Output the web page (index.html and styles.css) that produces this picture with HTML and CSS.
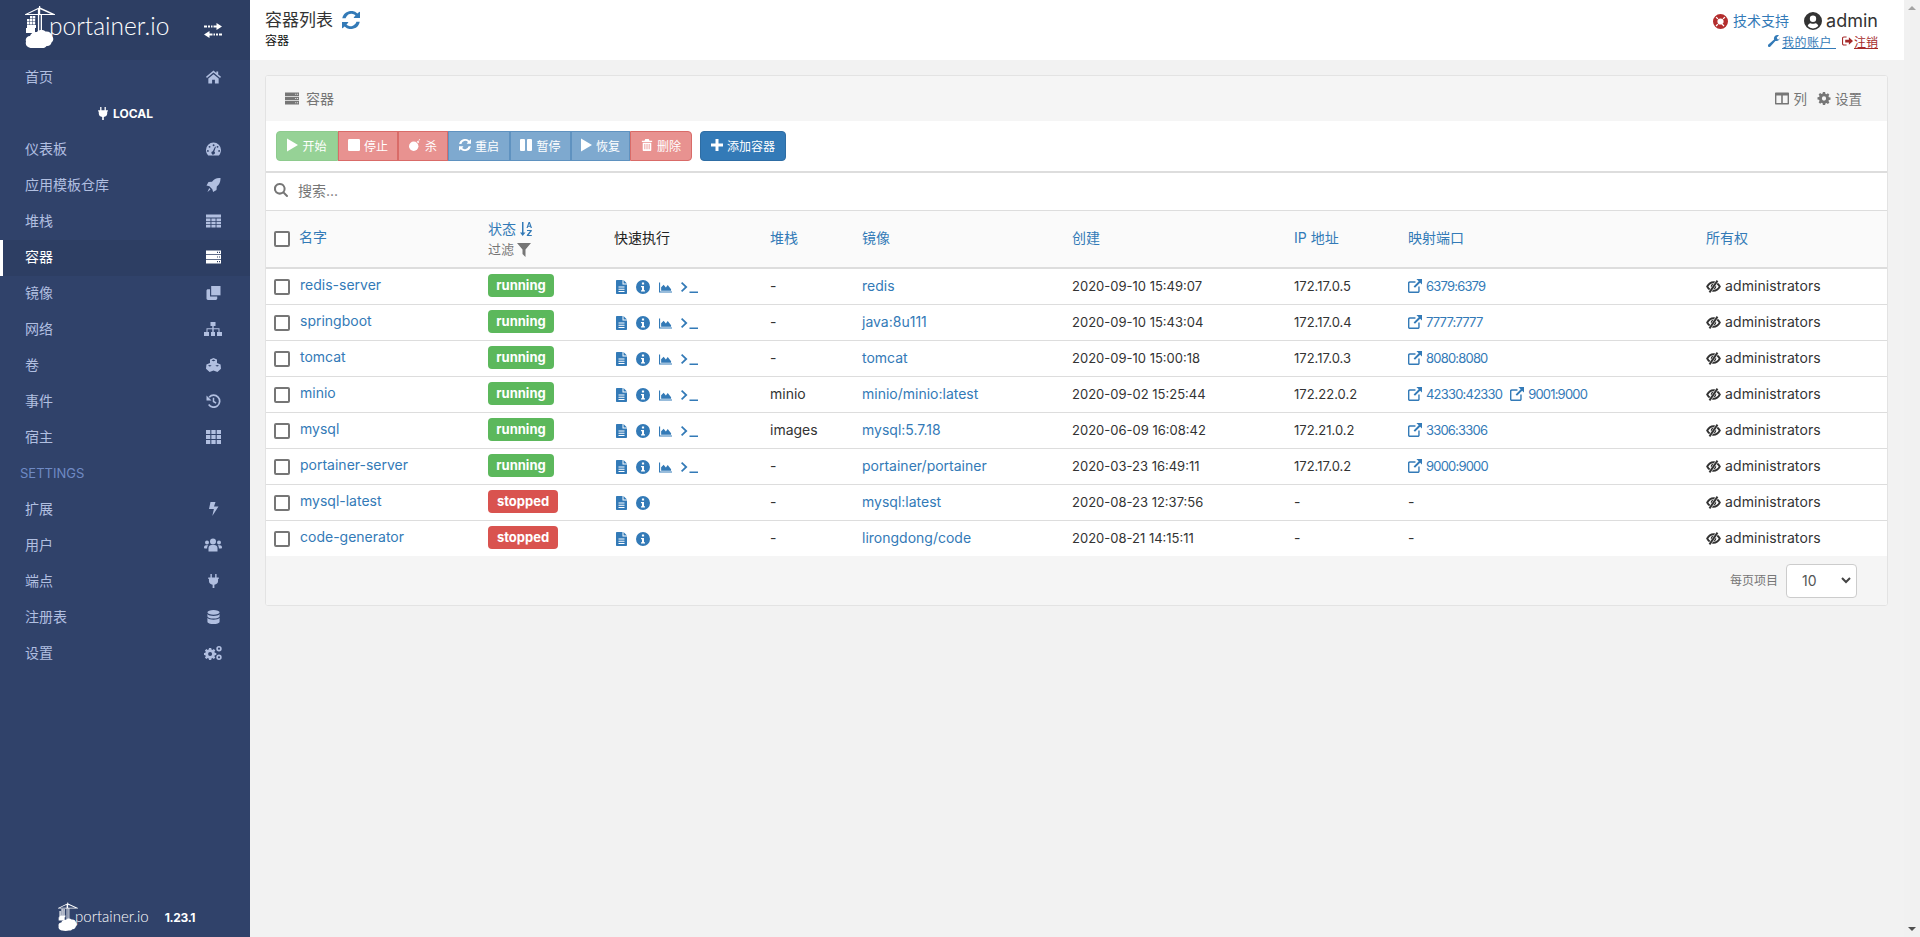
FILE: index.html
```html
<!DOCTYPE html>
<html lang="zh">
<head>
<meta charset="utf-8">
<title>Portainer</title>
<link rel="stylesheet" href="styles.css">
</head>
<body>
<svg class="defs" width="0" height="0" aria-hidden="true">
  <symbol id="i-home" viewBox="0 0 16 14"><path d="M8 0 0 6.800l1 1.200L8 2.200 15 8l1-1.200-3-2.500V1h-2v1.600zM2.500 8.600V14h4v-4h3v4h4V8.600L8 4z"/></symbol>
  <symbol id="i-plug" viewBox="0 0 12 16"><path d="M2.500 0h1.600v4h3.800V0h1.600v4H12v1.600h-.8V8c0 2.400-1.800 4-4.200 4.300V16H5v-3.700C2.600 12 .8 10.400.8 8V5.600H0V4h2.500z"/></symbol>
  <symbol id="i-gauge" viewBox="0 0 16 14"><path fill-rule="evenodd" d="M8 0a8 8 0 0 1 8 8c0 2.300-.9 4.400-2.300 6H2.300A8.100 8.100 0 0 1 0 8a8 8 0 0 1 8-8zM8.100 2a1 1 0 1 0 0 2 1 1 0 0 0 0-2zM3.800 3.700a1 1 0 1 0 0 2 1 1 0 0 0 0-2zm8.500 0a1 1 0 1 0 0 2 1 1 0 0 0 0-2zM2 8a1 1 0 1 0 0 2 1 1 0 0 0 0-2zm12 0a1 1 0 1 0 0 2 1 1 0 0 0 0-2zM9.600 4.500 7.300 9.300a1.800 1.800 0 1 0 1.500.4l1.800-5z"/></symbol>
  <symbol id="i-rocket" viewBox="0 0 14 14"><path d="M14 0c.2 3.600-1.200 6.600-3.700 8.500l-.3 3.400L6.600 14l-.8-2.800L2.900 8.300 0 7.500l2-3.400 3.500-.4C7.400 1.100 10.400-.2 14 0zM2.700 10.100l1.300 1.300L1 14z"/></symbol>
  <symbol id="i-table" viewBox="0 0 15 13"><path d="M0 0h15v3H0zM0 4h4.500v2.500H0zm5.400 0h4.200v2.500H5.400zm5.100 0H15v2.500h-4.500zM0 7.300h4.500v2.500H0zm5.400 0h4.200v2.500H5.400zm5.100 0H15v2.500h-4.500zM0 10.600h4.500V13H0zm5.400 0h4.200V13H5.400zm5.100 0H15V13h-4.500z"/></symbol>
  <symbol id="i-server" viewBox="0 0 15 13"><path fill-rule="evenodd" d="M0 0h15v3.800H0zm11 1.300v1.200h1V1.300zm2 0v1.200h1V1.300zM0 4.600h15v3.800H0zm11 1.300v1.200h1V5.900zm2 0v1.200h1V5.900zM0 9.200h15V13H0zm11 1.300v1.200h1v-1.200zm2 0v1.200h1v-1.200z"/></symbol>
  <symbol id="i-clone" viewBox="0 0 15 15"><path d="M5 0h10v10H5z"/><path d="M3.800 3.500H1.500C.7 3.500 0 4.200 0 5v8.500c0 .8.700 1.500 1.500 1.500H10c.8 0 1.500-.7 1.500-1.500v-2.300H3.800z"/></symbol>
  <symbol id="i-sitemap" viewBox="0 0 18 14"><path d="M6.500 0h5v4h-1.800v2.200H15.500V10h2.500v4h-5v-4h1.500V7.300H9.700V10H11v4H7v-4h1.300V7.300H3.500V10H5v4H0v-4h2.500V6.200h5.800V4H6.500z"/></symbol>
  <symbol id="i-cubes" viewBox="0 0 15 14"><path fill-rule="evenodd" d="M7.500 0 11 1.400v3.700L14.600 6.500 15 10.800 11.400 14 7.500 12.500 3.600 14 0 10.800l.4-4.300L4 5.100V1.400zM7.500 1.600 5.500 2.400l2 .9 2-.9zM3.800 7l-1.900.8 1.900.8 1.900-.8zm7.400 0-1.900.8 1.900.8 1.900-.8z"/></symbol>
  <symbol id="i-history" viewBox="0 0 14 14"><path d="M2.700 3.200A6 6 0 1 1 2.200 10.600" fill="none" stroke="currentColor" stroke-width="1.700"/><path d="M0 1.500V6.500H5z"/><path d="M7 3.700V7.500L9.600 9.200" fill="none" stroke="currentColor" stroke-width="1.500"/></symbol>
  <symbol id="i-grid" viewBox="0 0 14 13"><path d="M0 0h4v3.800H0zm5 0h4v3.800H5zm5 0h4v3.800h-4zM0 4.600h4v3.800H0zm5 0h4v3.800H5zm5 0h4v3.800h-4zM0 9.200h4V13H0zm5 0h4V13H5zm5 0h4V13h-4z"/></symbol>
  <symbol id="i-bolt" viewBox="0 0 10 14"><path d="M2 0h5L5.500 4.500H10L3.800 14l1.600-7H.5z"/></symbol>
  <symbol id="i-users" viewBox="0 0 18 13"><circle cx="9" cy="3" r="3"/><circle cx="3" cy="4" r="2"/><circle cx="15" cy="4" r="2"/><path d="M4.500 13V9.600C4.500 7.800 6 6.500 7.500 6.500h3c1.500 0 3 1.300 3 3.100V13zM0 9.300C0 7.500 1 6.800 2 6.800h2.300c-.8.700-1.200 1.600-1.200 2.700v.6H1C.5 10.100 0 9.800 0 9.300zm18 0c0-1.800-1-2.500-2-2.500h-2.300c.8.700 1.200 1.600 1.200 2.700v.6H17c.5 0 1-.3 1-.8z"/></symbol>
  <symbol id="i-db" viewBox="0 0 13 15"><ellipse cx="6.500" cy="2.500" rx="6.500" ry="2.500"/><path d="M0 4.200C1 5.700 3.600 6.300 6.500 6.300S12 5.700 13 4.200v2.500C13 8.200 10 9.200 6.500 9.200S0 8.200 0 6.700zM0 8.400c1 1.500 3.600 2.100 6.500 2.100S12 9.900 13 8.400v4.100c0 1.500-3 2.500-6.500 2.500S0 14 0 12.500z"/></symbol>
  <symbol id="i-cogs" viewBox="0 0 18 14"><path fill-rule="evenodd" d="M5 2h2.200l.3 1.500 1 .4L9.800 3l1.500 1.500-.9 1.300.4 1 1.500.3V9l-1.500.3-.4 1 .9 1.300L9.800 13l-1.300-.9-1 .4-.3 1.500H5l-.3-1.500-1-.4-1.300.9L.9 11.600l.9-1.300-.4-1L0 9V7.100l1.400-.3.4-1-.9-1.300L2.400 3l1.300.9 1-.4zM6.100 6a2 2 0 1 0 0 4 2 2 0 0 0 0-4z"/><path fill-rule="evenodd" d="M15 0a2.700 2.700 0 1 1 0 5.400A2.700 2.700 0 0 1 15 0zm0 1.600a1.100 1.100 0 1 0 0 2.200 1.100 1.100 0 0 0 0-2.200zM15 8.600a2.700 2.700 0 1 1 0 5.400 2.700 2.700 0 0 1 0-5.400zm0 1.600a1.100 1.100 0 1 0 0 2.200 1.100 1.100 0 0 0 0-2.200z"/></symbol>
  <symbol id="i-refresh" viewBox="0 0 16 16"><path d="M15.800 9.500A8 8 0 0 1 2.300 13.700L.8 15.200c-.2.200-.8.100-.8-.4V9.700h5.100c.5 0 .7.500.4.800L4 12a5.300 5.300 0 0 0 8.800-2.500zM16 1.200v5.100h-5.100c-.5 0-.7-.5-.4-.8L12 4a5.300 5.300 0 0 0-8.800 2.500H.2A8 8 0 0 1 13.700 2.300L15.200.8c.2-.2.800-.1.800.4z"/></symbol>
  <symbol id="i-play" viewBox="0 0 12 14"><path d="M0 0 12 7 0 14z"/></symbol>
  <symbol id="i-stop" viewBox="0 0 12 12"><rect width="12" height="12" rx="1.200"/></symbol>
  <symbol id="i-bomb" viewBox="0 0 14 14"><circle cx="5.500" cy="8.500" r="5.500"/><path d="M9 3.300 10.500 2l1.500 1.500-1.300 1.500zM11 1.500 12.500 0l.6.600-1.500 1.500z"/></symbol>
  <symbol id="i-pause" viewBox="0 0 12 12"><rect width="5" height="12" rx="1"/><rect x="7" width="5" height="12" rx="1"/></symbol>
  <symbol id="i-trash" viewBox="0 0 12 14"><path fill-rule="evenodd" d="M4 0h4l1 2h3v1.500H0V2h3zM1 4.300h10V13c0 .6-.4 1-1 1H2c-.6 0-1-.4-1-1zm2 1.400V12h1V5.700zm2.500 0V12h1V5.700zm2.500 0V12h1V5.700z"/></symbol>
  <symbol id="i-plus" viewBox="0 0 12 12"><path d="M4.500 0h3v4.500H12v3H7.500V12h-3V7.500H0v-3h4.500z"/></symbol>
  <symbol id="i-search" viewBox="0 0 14 14"><path fill-rule="evenodd" d="M5.800 0a5.800 5.800 0 0 1 4.700 9.100l3.200 3.200c.4.400.4 1 0 1.400-.4.400-1 .4-1.400 0l-3.200-3.200A5.800 5.800 0 1 1 5.800 0zm0 2a3.800 3.800 0 1 0 0 7.600 3.800 3.800 0 0 0 0-7.600z"/></symbol>
  <symbol id="i-sort" viewBox="0 0 12 14"><path d="M2 0h1.500v10.500H5.500L2.700 14 0 10.500h2zM8.600 0h1.300L12 6h-1.300l-.4-1.200H8.100L7.700 6H6.500zm.6 1.600-.8 2.200h1.500zM7 8h4.800v1.100L8.700 12.900h3.100V14H6.800v-1.100L10 9.100H7z"/></symbol>
  <symbol id="i-filter" viewBox="0 0 14 14"><path d="M0 0h14L8.500 6.500V14L5.500 11V6.500z"/></symbol>
  <symbol id="i-file" viewBox="0 0 11 14"><path fill-rule="evenodd" d="M0 1c0-.6.400-1 1-1h5.500v4.500H11V13c0 .6-.4 1-1 1H1c-.6 0-1-.4-1-1zM7.500 0 11 3.500H7.500zM2.500 6.500v1h6v-1zm0 2.200v1h6v-1zm0 2.200v1h6v-1z"/></symbol>
  <symbol id="i-info" viewBox="0 0 14 14"><path fill-rule="evenodd" d="M7 0a7 7 0 1 1 0 14A7 7 0 0 1 7 0zM5.900 2.500v2h2.200v-2zM5 6v1.300h1v3H5v1.200h4v-1.200H8V6z"/></symbol>
  <symbol id="i-chart" viewBox="0 0 14 11"><path d="M0 0h1.200v9.800H14V11H0zM2.300 9V5.300L5 2.500l2.400 3 2-2.700L13 7.500V9z"/></symbol>
  <symbol id="i-term" viewBox="0 0 17 11"><path d="m0 1.300 1.200-1.300 5.300 5-5.300 5L0 8.700 3.900 5zM8.500 9.500H17V11H8.500z"/></symbol>
  <symbol id="i-ext" viewBox="0 0 15 15"><path d="M1.800 2.500H8v1.500H2a.5.5 0 0 0-.5.500v8.500c0 .3.200.5.500.5h8.500c.3 0 .5-.2.500-.5V8h1.500v5c0 1-.8 2-2 2H2c-1.200 0-2-1-2-2V4.300c0-1 .8-1.800 1.800-1.800z"/><path d="M9 0h6v6l-2-2-5.500 5.500-1.500-1.500L11.500 2.500z"/></symbol>
  <symbol id="i-eyeoff" viewBox="0 0 14 13"><path d="M.7 6.500C2.200 3.700 4.500 2.200 7 2.200s4.800 1.500 6.300 4.300C11.800 9.300 9.500 10.800 7 10.800S2.200 9.300.7 6.500z" fill="none" stroke="currentColor" stroke-width="1.900"/><circle cx="7" cy="6.500" r="2.700"/><path d="M11 .6 3 12.400" stroke="#fff" stroke-width="2.900"/><path d="M11 .6 3 12.400" stroke="currentColor" stroke-width="1.900"/></symbol>
  <symbol id="i-life" viewBox="0 0 16 16"><path fill-rule="evenodd" d="M8 0a8 8 0 1 1 0 16A8 8 0 0 1 8 0zm0 4.700a3.300 3.300 0 1 0 0 6.600 3.300 3.300 0 0 0 0-6.600zM2.800 3.800l1.900 1.900c.3-.4.600-.7 1-1L3.800 2.800c-.4.300-.7.600-1 1zm9.400-1-1.900 1.900c.4.300.7.600 1 1l1.900-1.900c-.3-.4-.6-.7-1-1zm-8.400 10.400 1.900-1.900c-.4-.3-.7-.6-1-1l-1.900 1.900c.3.400.6.700 1 1zm8.400-1-1.900-1.900c-.3.400-.6.700-1 1l1.900 1.900c.4-.3.700-.6 1-1z"/></symbol>
  <symbol id="i-user" viewBox="0 0 17 17"><path fill-rule="evenodd" d="M8.500 0a8.500 8.500 0 1 1 0 17 8.500 8.500 0 0 1 0-17zm0 3.400a3 3 0 1 0 0 6 3 3 0 0 0 0-6zm-5 9.900a6.800 6.800 0 0 0 10 0c-.4-1.500-1.400-2.700-2.900-2.700-.6.400-1.300.6-2.100.6s-1.500-.2-2.100-.6c-1.500 0-2.500 1.200-2.900 2.700z"/></symbol>
  <symbol id="i-wrench" viewBox="0 0 13 13"><path d="M13 2.800c0 2.100-1.700 3.800-3.800 3.800-.4 0-.8-.1-1.200-.2L2.600 12.500c-.6.700-1.600.7-2.200.1-.6-.6-.6-1.600 0-2.200L6.600 5c-.1-.4-.2-.8-.2-1.200C6.400 1.700 8.100 0 10.200 0c.6 0 1.200.1 1.700.4L9.500 2.700l.8 1.900 1.900.3 .7-2.200z"/></symbol>
  <symbol id="i-signout" viewBox="0 0 12 10"><path d="M2 0h3v1.200H2c-.5 0-.8.300-.8.800v6c0 .5.300.8.800.8h3V10H2c-1.100 0-2-.9-2-2V2C0 .9.900 0 2 0z"/><path d="M7.500 1 12 5 7.500 9V6.500H3.500v-3h4z"/></symbol>
  <symbol id="i-columns" viewBox="0 0 14 12"><path fill-rule="evenodd" d="M1 0h12c.6 0 1 .4 1 1v10c0 .6-.4 1-1 1H1c-.6 0-1-.4-1-1V1c0-.6.400-1 1-1zm.4 3v7.600h4.800V3zm6.400 0v7.600h4.800V3z"/></symbol>
  <symbol id="i-cog" viewBox="0 0 14 14"><path fill-rule="evenodd" d="M5.800 0h2.400l.3 1.800 1.200.5L11.200 1.300l1.600 1.600-1 1.500.5 1.200 1.700.3v2.400l-1.700.3-.5 1.200 1 1.500-1.600 1.600-1.500-1-1.200.5L8.200 14H5.800l-.3-1.800-1.200-.5-1.500 1-1.600-1.600 1-1.500-.5-1.200L0 8.100V5.700l1.700-.3.500-1.200-1-1.500 1.600-1.600 1.500 1 1.200-.5zM7 4.700a2.300 2.300 0 1 0 0 4.600 2.300 2.300 0 0 0 0-4.600z"/></symbol>
  <symbol id="i-swap" viewBox="0 0 18 15"><path d="M0 2.500h3v2H0zm4 0h2v2H4zm3 0h1.500v2H7zm2.500 0h3V0L18 3.500 12.500 7V4.500h-3zM18 10.500v2h-3v-2zm-4 0v2h-2v-2zm-3 0v2H9.500v-2zm-2.500 0v2h-3V15L0 11.500 5.500 8v2.500z"/></symbol>
  <symbol id="i-logo" viewBox="0 0 30 42"><path d="M0 8.200 14 1.500V0h1.200v1.500L30 8.200v.9H17V27h-1.300V9.100h-1.500V26h-1.300V9.100H0zM3 8h9.900V3.300zm12.200-4.800V8h10.600z"/><path d="M2 13h2.400v2.400H2zm2.900 0h2.400v2.400H4.900zm2.900 0h2.400v2.400H7.800zM2 16h2.400v2.400H2zm2.900 0h2.400v2.400H4.900zm2.900 0h2.400v2.400H7.800zM5 10h2.400v2.400H5zm2.900 0h2.400v2.400H7.900zM2 19h9v3H2zM1 22h9v5H1z"/><path d="M6 42h-.5C2 41 0 39 1 35.500c-1-3 1-5.500 4-5.500 1-3 4-4.500 7-4 2-2.500 6-2.500 8.500-.5 3.500-.5 6 1.500 6.500 4.500 2 2 1.500 5-.5 6.500-.5 2.500-2.500 4-5 3.500-1 1.500-3 2.500-5 2-3 1-7 1-10.500 0z"/></symbol>
</svg>

<div class="app">
  <aside class="sidebar">
    <div class="brand">
      <a class="logo"><svg class="logo-mark"><use href="#i-logo"/></svg><span class="logo-text">portainer.io</span></a>
      <svg class="swap"><use href="#i-swap"/></svg>
    </div>
    <nav class="nav">
      <a class="nav-row"><span>首页</span><svg class="ni"><use href="#i-home"/></svg></a>
      <div class="endpoint"><svg class="ep-icon"><use href="#i-plug"/></svg>LOCAL</div>
      <a class="nav-row"><span>仪表板</span><svg class="ni"><use href="#i-gauge"/></svg></a>
      <a class="nav-row"><span>应用模板仓库</span><svg class="ni"><use href="#i-rocket"/></svg></a>
      <a class="nav-row"><span>堆栈</span><svg class="ni"><use href="#i-table"/></svg></a>
      <a class="nav-row active"><span>容器</span><svg class="ni"><use href="#i-server"/></svg></a>
      <a class="nav-row"><span>镜像</span><svg class="ni"><use href="#i-clone"/></svg></a>
      <a class="nav-row"><span>网络</span><svg class="ni wide"><use href="#i-sitemap"/></svg></a>
      <a class="nav-row"><span>卷</span><svg class="ni"><use href="#i-cubes"/></svg></a>
      <a class="nav-row"><span>事件</span><svg class="ni"><use href="#i-history"/></svg></a>
      <a class="nav-row"><span>宿主</span><svg class="ni"><use href="#i-grid"/></svg></a>
      <div class="nav-title">SETTINGS</div>
      <a class="nav-row"><span>扩展</span><svg class="ni"><use href="#i-bolt"/></svg></a>
      <a class="nav-row"><span>用户</span><svg class="ni wide"><use href="#i-users"/></svg></a>
      <a class="nav-row"><span>端点</span><svg class="ni"><use href="#i-plug"/></svg></a>
      <a class="nav-row"><span>注册表</span><svg class="ni"><use href="#i-db"/></svg></a>
      <a class="nav-row"><span>设置</span><svg class="ni wide"><use href="#i-cogs"/></svg></a>
    </nav>
    <div class="side-foot">
      <svg class="foot-mark"><use href="#i-logo"/></svg><span class="foot-text">portainer.io</span><span class="foot-ver">1.23.1</span>
    </div>
  </aside>

  <div class="main">
    <header class="topbar">
      <div class="top-left">
        <div class="page-title">容器列表<svg class="refresh"><use href="#i-refresh"/></svg></div>
        <div class="crumb">容器</div>
      </div>
      <div class="top-right">
        <div class="tr-line1">
          <svg class="life"><use href="#i-life"/></svg><a class="support">技术支持</a>
          <svg class="user-ic"><use href="#i-user"/></svg><span class="uname">admin</span>
        </div>
        <div class="tr-line2">
          <a class="my"><svg class="wrench"><use href="#i-wrench"/></svg><u>我的账户&nbsp;</u></a>
          <a class="logout"><svg class="so"><use href="#i-signout"/></svg><u>注销</u></a>
        </div>
      </div>
    </header>

    <section class="card">
      <div class="card-head">
        <div class="ch-left"><svg class="ch-ic"><use href="#i-server"/></svg>容器</div>
        <div class="ch-right">
          <svg class="ch-ic"><use href="#i-columns"/></svg><span>列</span>
          <svg class="ch-ic gear"><use href="#i-cog"/></svg><span>设置</span>
        </div>
      </div>
      <div class="actions">
        <div class="btn-group">
          <button class="btn green"><svg class="bi play"><use href="#i-play"/></svg>开始</button>
          <button class="btn red"><svg class="bi"><use href="#i-stop"/></svg>停止</button>
          <button class="btn red"><svg class="bi"><use href="#i-bomb"/></svg>杀</button>
          <button class="btn blue"><svg class="bi"><use href="#i-refresh"/></svg>重启</button>
          <button class="btn blue"><svg class="bi"><use href="#i-pause"/></svg>暂停</button>
          <button class="btn blue"><svg class="bi play"><use href="#i-play"/></svg>恢复</button>
          <button class="btn red"><svg class="bi"><use href="#i-trash"/></svg>删除</button>
        </div>
        <button class="btn add"><svg class="bi"><use href="#i-plus"/></svg>添加容器</button>
      </div>
      <div class="search"><svg class="search-ic"><use href="#i-search"/></svg><span>搜索...</span></div>
      <table class="tbl">
        <colgroup>
          <col class="c1"><col class="c2"><col class="c3"><col class="c4"><col class="c5"><col class="c6"><col class="c7"><col class="c8"><col class="c9">
        </colgroup>
        <thead>
          <tr>
            <th><span class="check"></span><a class="lnk">名字</a></th>
            <th class="th-state"><a class="lnk">状态<svg class="sort"><use href="#i-sort"/></svg></a><div class="filter">过滤<svg class="funnel"><use href="#i-filter"/></svg></div></th>
            <th class="dark">快速执行</th>
            <th><a class="lnk">堆栈</a></th>
            <th><a class="lnk">镜像</a></th>
            <th><a class="lnk">创建</a></th>
            <th><a class="lnk">IP 地址</a></th>
            <th><a class="lnk">映射端口</a></th>
            <th><a class="lnk">所有权</a></th>
          </tr>
        </thead>
        <tbody>
          <tr>
            <td><span class="check"></span><a class="lnk">redis-server</a></td>
            <td><span class="badge ok">running</span></td>
            <td><span class="qa"><svg class="q1"><use href="#i-file"/></svg><svg class="q2"><use href="#i-info"/></svg><svg class="q3"><use href="#i-chart"/></svg><svg class="q4"><use href="#i-term"/></svg></span></td>
            <td>-</td><td><a class="lnk">redis</a></td><td class="num">2020-09-10 15:49:07</td><td class="num">172.17.0.5</td>
            <td class="num"><a class="lnk port"><svg class="ext"><use href="#i-ext"/></svg>6379:6379</a></td>
            <td class="own"><svg class="eye"><use href="#i-eyeoff"/></svg>administrators</td>
          </tr>
          <tr>
            <td><span class="check"></span><a class="lnk">springboot</a></td>
            <td><span class="badge ok">running</span></td>
            <td><span class="qa"><svg class="q1"><use href="#i-file"/></svg><svg class="q2"><use href="#i-info"/></svg><svg class="q3"><use href="#i-chart"/></svg><svg class="q4"><use href="#i-term"/></svg></span></td>
            <td>-</td><td><a class="lnk">java:8u111</a></td><td class="num">2020-09-10 15:43:04</td><td class="num">172.17.0.4</td>
            <td class="num"><a class="lnk port"><svg class="ext"><use href="#i-ext"/></svg>7777:7777</a></td>
            <td class="own"><svg class="eye"><use href="#i-eyeoff"/></svg>administrators</td>
          </tr>
          <tr>
            <td><span class="check"></span><a class="lnk">tomcat</a></td>
            <td><span class="badge ok">running</span></td>
            <td><span class="qa"><svg class="q1"><use href="#i-file"/></svg><svg class="q2"><use href="#i-info"/></svg><svg class="q3"><use href="#i-chart"/></svg><svg class="q4"><use href="#i-term"/></svg></span></td>
            <td>-</td><td><a class="lnk">tomcat</a></td><td class="num">2020-09-10 15:00:18</td><td class="num">172.17.0.3</td>
            <td class="num"><a class="lnk port"><svg class="ext"><use href="#i-ext"/></svg>8080:8080</a></td>
            <td class="own"><svg class="eye"><use href="#i-eyeoff"/></svg>administrators</td>
          </tr>
          <tr>
            <td><span class="check"></span><a class="lnk">minio</a></td>
            <td><span class="badge ok">running</span></td>
            <td><span class="qa"><svg class="q1"><use href="#i-file"/></svg><svg class="q2"><use href="#i-info"/></svg><svg class="q3"><use href="#i-chart"/></svg><svg class="q4"><use href="#i-term"/></svg></span></td>
            <td>minio</td><td><a class="lnk">minio/minio:latest</a></td><td class="num">2020-09-02 15:25:44</td><td class="num">172.22.0.2</td>
            <td class="num"><a class="lnk port"><svg class="ext"><use href="#i-ext"/></svg>42330:42330</a><a class="lnk port second"><svg class="ext"><use href="#i-ext"/></svg>9001:9000</a></td>
            <td class="own"><svg class="eye"><use href="#i-eyeoff"/></svg>administrators</td>
          </tr>
          <tr>
            <td><span class="check"></span><a class="lnk">mysql</a></td>
            <td><span class="badge ok">running</span></td>
            <td><span class="qa"><svg class="q1"><use href="#i-file"/></svg><svg class="q2"><use href="#i-info"/></svg><svg class="q3"><use href="#i-chart"/></svg><svg class="q4"><use href="#i-term"/></svg></span></td>
            <td>images</td><td><a class="lnk">mysql:5.7.18</a></td><td class="num">2020-06-09 16:08:42</td><td class="num">172.21.0.2</td>
            <td class="num"><a class="lnk port"><svg class="ext"><use href="#i-ext"/></svg>3306:3306</a></td>
            <td class="own"><svg class="eye"><use href="#i-eyeoff"/></svg>administrators</td>
          </tr>
          <tr>
            <td><span class="check"></span><a class="lnk">portainer-server</a></td>
            <td><span class="badge ok">running</span></td>
            <td><span class="qa"><svg class="q1"><use href="#i-file"/></svg><svg class="q2"><use href="#i-info"/></svg><svg class="q3"><use href="#i-chart"/></svg><svg class="q4"><use href="#i-term"/></svg></span></td>
            <td>-</td><td><a class="lnk">portainer/portainer</a></td><td class="num">2020-03-23 16:49:11</td><td class="num">172.17.0.2</td>
            <td class="num"><a class="lnk port"><svg class="ext"><use href="#i-ext"/></svg>9000:9000</a></td>
            <td class="own"><svg class="eye"><use href="#i-eyeoff"/></svg>administrators</td>
          </tr>
          <tr>
            <td><span class="check"></span><a class="lnk">mysql-latest</a></td>
            <td><span class="badge bad">stopped</span></td>
            <td><span class="qa"><svg class="q1"><use href="#i-file"/></svg><svg class="q2"><use href="#i-info"/></svg></span></td>
            <td>-</td><td><a class="lnk">mysql:latest</a></td><td class="num">2020-08-23 12:37:56</td><td>-</td><td>-</td>
            <td class="own"><svg class="eye"><use href="#i-eyeoff"/></svg>administrators</td>
          </tr>
          <tr>
            <td><span class="check"></span><a class="lnk">code-generator</a></td>
            <td><span class="badge bad">stopped</span></td>
            <td><span class="qa"><svg class="q1"><use href="#i-file"/></svg><svg class="q2"><use href="#i-info"/></svg></span></td>
            <td>-</td><td><a class="lnk">lirongdong/code</a></td><td class="num">2020-08-21 14:15:11</td><td>-</td><td>-</td>
            <td class="own"><svg class="eye"><use href="#i-eyeoff"/></svg>administrators</td>
          </tr>
        </tbody>
      </table>
      <div class="card-foot">
        <span class="pp">每页项目</span>
        <div class="fake-select"><span>10</span><svg class="chev" viewBox="0 0 10 7"><path d="M1 1l4 4 4-4" fill="none" stroke="#444" stroke-width="2"/></svg></div>
      </div>
    </section>
  </div>

  <div class="scrollbar"><span class="sb-up"></span><span class="sb-down"></span></div>
</div>
</body>
</html>
```

FILE: styles.css
```css
* { box-sizing: border-box; }
html, body { margin: 0; height: 100%; overflow: hidden; }
body {
  font-family: "Inter", "Noto Sans CJK SC", sans-serif;
  font-size: 14px;
  color: #333;
  background: #f2f2f2;
}
.defs { position: absolute; }
svg { fill: currentColor; display: inline-block; flex: none; }
a { color: inherit; text-decoration: none; }

.app { display: flex; height: 937px; }

/* sidebar */
.sidebar {
  width: 250px; flex: none; display: flex; flex-direction: column;
  background: #30426a; color: #b1bfe0;
}
.brand {
  height: 60px; flex: none; background: #2d3e63; color: #fff;
  display: flex; align-items: flex-start; justify-content: space-between;
  padding: 6px 28px 0 25px;
}
.logo { display: flex; align-items: flex-start; }
.logo-mark { width: 30px; height: 42px; }
.logo-text {
  font-family: "Lato", sans-serif; font-weight: 300; font-size: 24.5px;
  line-height: 30px; margin: 5px 0 0 -6px;
}
.swap { width: 18px; height: 15px; margin-top: 17px; }
.nav { flex: 1; }
.nav-row {
  height: 36px; display: flex; align-items: center; justify-content: space-between;
  padding: 0 29px 2px 25px; font-size: 14px; border-left: 0 solid #fff;
}
.nav-row span { margin-bottom: 2px; }
.nav-row.active { background: #2d3e63; color: #fff; border-left-width: 3px; padding-left: 22px; }
.ni { width: 15px; height: 14px; }
.ni.wide { width: 18px; margin-right: -1px; }
.endpoint {
  height: 36px; display: flex; align-items: center; justify-content: center;
  color: #fff; font-size: 12px; font-weight: 700; gap: 5px; padding: 0 0 2px 1px;
}
.ep-icon { width: 10px; height: 13px; }
.nav-title {
  height: 36px; display: flex; align-items: center; padding: 0 0 2px 20px;
  font-size: 13px; color: #6f8ac4;
}
.side-foot {
  height: 40px; flex: none; display: flex; align-items: center; padding: 0 0 0 58px;
  color: #fff;
}
.foot-mark { width: 20px; height: 29px; margin-bottom: 2px; }
.foot-text { font-family: "Lato", sans-serif; font-weight: 300; font-size: 15px; margin: -2px 0 0 -3px; }
.foot-ver { font-size: 12px; font-weight: 700; margin-left: 16px; letter-spacing: -.3px; }

/* top */
.main { flex: 1; min-width: 0; }
.topbar {
  height: 60px; background: #fff; display: flex; justify-content: space-between;
  padding: 0 26px 0 15px;
}
.page-title { font-size: 17px; color: #333; line-height: 20px; margin-top: 10px; display: flex; align-items: center; }
.refresh { width: 18px; height: 18px; color: #337ab7; margin-left: 9px; }
.crumb { font-size: 12px; color: #111; line-height: 14px; margin-top: 4px; }
.top-right { display: flex; flex-direction: column; align-items: flex-end; font-size: 14px; }
.tr-line1 { display: flex; align-items: center; height: 20px; margin-top: 11px; }
.life { width: 15px; height: 15px; color: #b32d2d; margin-right: 5px; }
.support { color: #337ab7; margin-bottom: 2px; }
.user-ic { width: 18px; height: 18px; color: #333; margin: 0 4px 0 15px; }
.uname { font-size: 18px; color: #333; line-height: 20px; }
.tr-line2 { display: flex; align-items: center; font-size: 12px; margin-top: 2px; height: 16px; }
.my { color: #337ab7; display: flex; align-items: center; }
.my u { letter-spacing: .5px; }
.wrench { width: 12px; height: 12px; margin-right: 2px; }
.logout { color: #a52a2a; display: flex; align-items: center; margin-left: 6px; }
.so { width: 11px; height: 10px; margin-right: 1px; }
u { text-underline-offset: 1px; }

/* card */
.card {
  margin: 15px 16px 0 15px; width: calc(100% - 31px);
  background: #fff; border: 1px solid #e3e3e3; border-radius: 3px; overflow: hidden;
}
.card-head {
  height: 45px; background: #f5f5f5; display: flex; align-items: center; justify-content: space-between;
  padding: 0 25px 1px 19px; color: #767676; font-size: 14px;
}
.ch-left { display: flex; align-items: center; }
.ch-left .ch-ic { margin-right: 7px; }
.ch-right { display: flex; align-items: center; font-size: 13.5px; }
.ch-ic { width: 14px; height: 13px; margin-right: 5px; }
.gear { margin-left: 10px; margin-right: 4px; }
.actions {
  height: 52px; display: flex; align-items: flex-start; padding: 10px 0 0 10px; gap: 8px;
  border-bottom: 2px solid #ddd;
}
.btn-group { display: flex; }
.btn {
  height: 30px; padding: 0 0 2px; border: 1px solid transparent; color: #fff; font: inherit; font-size: 12px;
  display: inline-flex; align-items: center; justify-content: center; white-space: nowrap;
}
.bi { width: 12px; height: 12px; margin-right: 4px; }
.bi.play { width: 11px; height: 14px; }
.green { background: #96d296; border-color: #8ecb8e; width: 62px; border-radius: 4px 0 0 4px; }
.red { background: #e89290; border-color: #d96b68; }
.blue { background: #7ea9cf; border-color: #5f92c0; }
.btn-group .btn:nth-child(2) { width: 60px; }
.btn-group .btn:nth-child(3) { width: 50px; }
.btn-group .btn:nth-child(4) { width: 62px; }
.btn-group .btn:nth-child(5) { width: 61px; }
.btn-group .btn:nth-child(6) { width: 59px; }
.btn-group .btn:nth-child(7) { width: 62px; border-radius: 0 4px 4px 0; }
.add { background: #337ab7; border-color: #2e6da4; border-radius: 4px; width: 86px; }
.search {
  height: 38px; display: flex; align-items: center; padding: 0 0 4px 8px;
  color: #767676; font-size: 14px; border-bottom: 1px solid #ddd;
}
.search-ic { width: 14px; height: 14px; margin-right: 10px; }

/* table */
.tbl { width: 1622px; table-layout: fixed; border-collapse: separate; border-spacing: 0; }
.c1 { width: 214px; } .c2 { width: 126px; } .c3 { width: 156px; } .c4 { width: 92px; }
.c5 { width: 210px; } .c6 { width: 222px; } .c7 { width: 114px; } .c8 { width: 298px; } .c9 { width: 190px; }
.tbl th {
  height: 58px; background: #fafafa; font-weight: 400; text-align: left; padding: 0 8px 5px;
  font-size: 14px; border-bottom: 2px solid #ddd; vertical-align: middle; white-space: nowrap;
}
.tbl th .check { margin-right: 9px; }
.tbl th.dark { color: #222; }
.tbl td {
  height: 36px; padding: 0 8px 2px; border-bottom: 1px solid #ddd; font-size: 14px; color: #333; white-space: nowrap;
  vertical-align: middle;
}
.tbl td.num { font-size: 13px; }
.tbl td.own { letter-spacing: .1px; }
.tbl tbody tr:last-child td { border-bottom: 0; height: 35px; }
.lnk { color: #337ab7; }
.check {
  display: inline-block; width: 16px; height: 16px; border: 2px solid #767676; border-radius: 2px; background: #fff;
  vertical-align: middle; margin-right: 10px;
}
.th-state { line-height: 21px; }
.tbl th.th-state { padding-bottom: 0; }
.th-state .lnk { display: flex; align-items: center; }
.sort { width: 12px; height: 14px; margin-left: 4px; }
.filter { display: flex; align-items: center; font-size: 13px; color: #767676; }
.funnel { width: 14px; height: 14px; margin-left: 3px; }
.badge {
  display: inline-block; width: 66px; height: 23px; line-height: 22px; text-align: center; color: #fff; font-size: 13px;
  font-weight: 700; border-radius: 4px; vertical-align: middle;
}
.ok { background: #5cb85c; }
.bad { background: #d9534f; width: 70px; }
.qa { display: inline-flex; align-items: center; color: #337ab7; vertical-align: middle; }
.q1 { width: 11px; height: 14px; margin-left: 2px; }
.q2 { width: 14px; height: 14px; margin-left: 9px; }
.q3 { width: 13px; height: 11px; margin-left: 9px; }
.q4 { width: 17px; height: 11px; margin-left: 9px; }
.port { display: inline-flex; align-items: center; letter-spacing: -.8px; vertical-align: middle; }
.port.second { margin-left: 8px; }
.ext { width: 14px; height: 14px; margin-right: 4px; }
.eye { width: 15px; height: 13px; color: #333; margin-right: 4px; vertical-align: -2px; }

.card-foot {
  height: 49px; background: #f5f5f5; display: flex; align-items: center; justify-content: flex-end;
  padding: 0 30px 0 0; color: #767676; font-size: 12px; gap: 8px;
}
.pp { margin-bottom: 3px; }
.fake-select {
  width: 71px; height: 34px; background: #fff; border: 1px solid #ccc; border-radius: 4px; color: #555;
  display: flex; align-items: center; justify-content: space-between; padding: 0 4px 0 15px; font-size: 14px;
}
.chev { width: 10px; height: 7px; margin-right: 1px; }

/* scrollbar */
.scrollbar {
  width: 16px; flex: none; background: #f1f1f1; display: flex; flex-direction: column; justify-content: space-between;
  align-items: center; padding: 6px 0;
}
.sb-up, .sb-down { width: 0; height: 0; border: 4px solid transparent; margin-left: 0; }
.sb-up { border-bottom: 4px solid #a3a3a3; border-top-width: 0; }
.sb-down { border-top: 4px solid #505050; border-bottom-width: 0; }
```
